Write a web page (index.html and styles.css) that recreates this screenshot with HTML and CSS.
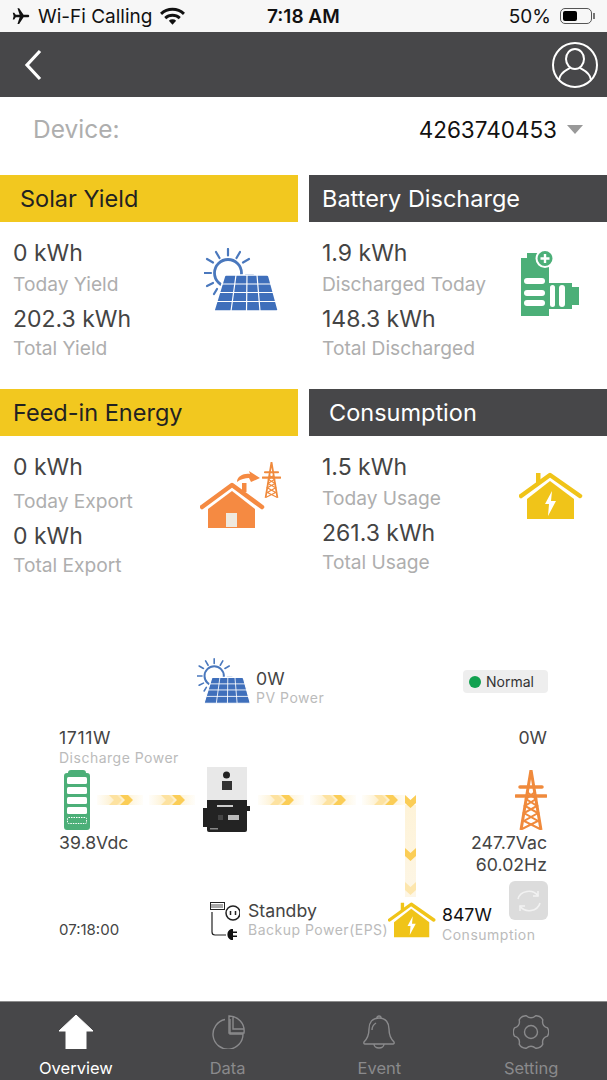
FILE: index.html
```html
<!DOCTYPE html>
<html lang="en">
<head>
    <meta charset="UTF-8">
    <meta name="viewport" content="width=device-width, initial-scale=1.0">
    <title>Overview</title>
    <link rel="stylesheet" href="styles.css">
</head>
<body>
    <svg class="defs" width="0" height="0">
        <defs>
            <linearGradient id="fadeBand" x1="0" x2="1" y1="0" y2="0">
                <stop offset="0" stop-color="#fdeec6" stop-opacity="0.1"/>
                <stop offset="0.45" stop-color="#fde8b4" stop-opacity="0.9"/>
                <stop offset="1" stop-color="#fdeec6" stop-opacity="0.1"/>
            </linearGradient>
            <linearGradient id="fadeDown" x1="0" x2="0" y1="0" y2="1">
                <stop offset="0" stop-color="#fef3d8"/>
                <stop offset="1" stop-color="#fdf6e6"/>
            </linearGradient>
            <symbol id="solar" viewBox="0 0 74 64">
                <g stroke="#4a78bd" stroke-width="2.2" fill="none" stroke-linecap="round">
                    <circle cx="24" cy="25" r="13.5" stroke-width="2.8"/>
                    <path d="M24 1v6.500M12 4l3.500 6M36 4l-3.500 6M3 11l6 3.500M45 11l-6 3.500M0 25h7M42 27h7M3 38l6-3M10 46l3-5"/>
                </g>
                <path d="M22 27h41q1.500 0 2 1.500l9 33q.3 1.500-1.500 1.500H11.500q-1.800 0-1.200-1.500l10-33q.4-1.500 1.700-1.500z" fill="#3f6fbb" stroke="#fff" stroke-width="1.600"/>
                <g stroke="#fff" stroke-width="1.200" fill="none">
                    <path d="M18 36h51M15.500 44.500h56M13 53.500h60.500"/>
                    <path d="M32 27l-5 36M43 27l-.5 36M53 27l3 36"/>
                </g>
            </symbol>
            <symbol id="battery-plus" viewBox="0 -4 58 68">
                <path d="M6 0h12v5h10v58H0V5h6z" fill="#4caf78"/>
                <path d="M28 30h23v26H28z" fill="#4caf78"/>
                <path d="M51 34h7v18h-7z" fill="#4caf78"/>
                <g fill="#fff">
                    <rect x="3" y="25" width="21" height="6" rx="3"/>
                    <rect x="3" y="37" width="21" height="6" rx="3"/>
                    <rect x="3" y="47" width="21" height="6" rx="3"/>
                    <rect x="29" y="32" width="5" height="22" rx="2.500"/>
                    <rect x="38" y="32" width="6" height="22" rx="3"/>
                </g>
                <circle cx="24" cy="5.500" r="8.500" fill="#4caf78" stroke="#fff" stroke-width="2"/>
                <path d="M24 1v9M19.500 5.500h9" stroke="#fff" stroke-width="2.400"/>
            </symbol>
            <symbol id="tower" viewBox="0 0 32 60">
                <g fill="none" stroke="#f08a3c">
                    <path d="M16 0L6 60M16 0l10 60" stroke-width="3"/>
                    <path d="M1 26h30M5 17h22" stroke-width="3.500" stroke-linecap="round"/>
                    <path d="M12 22l9 7-11 7 13 7-14 8 16 8M20 22l-9 7 11 7-13 7 14 8-16 8" stroke-width="2"/>
                </g>
            </symbol>
            <symbol id="feed-house" viewBox="0 0 82 70">
                <path d="M2 46L32 24l30 22" fill="none" stroke="#f58a42" stroke-width="4.500" stroke-linecap="round" stroke-linejoin="round"/>
                <path d="M42 22h4.500v9H42z" fill="#f58a42"/>
                <path d="M8 48L32 30l23 18v19H8z" fill="#f58a42"/>
                <path d="M26 52h11v14H26z" fill="#efe9df"/>
                <path d="M37 21c0-6 7-9 13-8l-1-3 11 7-9 4-2-4c-4 0-8 1-12 4z" fill="#f58a42"/>
                <use href="#tower" x="62" y="1" width="19" height="36"/>
            </symbol>
            <symbol id="yellow-house" viewBox="0 0 64 48">
                <path d="M2 24L31 3l30 21" fill="none" stroke="#f0c419" stroke-width="4.500" stroke-linecap="round" stroke-linejoin="round"/>
                <path d="M17 1h4.500v10H17z" fill="#f0c419"/>
                <path d="M8 27L31 9l24 18v20H8z" fill="#f0c419"/>
                <path d="M33 19l-7 13h4l-1 12 8-15h-5z" fill="#fff"/>
            </symbol>
            <symbol id="flow-h" viewBox="0 0 46 12">
                <rect x="0" y="1" width="46" height="10" fill="url(#fadeBand)"/>
                <path d="M12 1h8l5 5-5 5h-8l5-5z" fill="#fde2a0"/>
                <path d="M23 1h8l5 5-5 5h-8l5-5z" fill="#fbcd56"/>
            </symbol>
        </defs>
    </svg>

    <div class="statusbar">
        <div class="status-left">
            <svg class="plane" viewBox="0 0 24 24"><path d="M23 12c0-1-1-1.700-2-1.700h-5.600L9.500 1.500H7.300l2.900 8.800H5L3 7.500H1l1.200 4.500L1 16.500h2l2-2.800h5.200l-2.900 8.800h2.200l5.900-8.800H21c1 0 2-.7 2-1.700z" fill="#111"/></svg>
            <span>Wi-Fi Calling</span>
            <svg class="wifi" viewBox="0 0 24 18"><path d="M1 6.500a16 16 0 0 1 22 0M5 10.500a10.500 10.500 0 0 1 14 0" fill="none" stroke="#111" stroke-width="2.800"/><path d="M8.500 13a5 5 0 0 1 7 0L12 17z" fill="#111"/></svg>
        </div>
        <div class="status-time">7:18 AM</div>
        <div class="status-right">
            <span>50%</span>
            <div class="batt"><div class="batt-fill"></div></div>
            <div class="batt-tip"></div>
        </div>
    </div>

    <div class="header">
        <svg class="back" viewBox="0 0 18 32"><path d="M16 2L3 16l13 14" fill="none" stroke="#fff" stroke-width="3.200"/></svg>
        <svg class="avatar" viewBox="0 0 46 46" fill="none" stroke="#fff" stroke-width="2">
            <circle cx="23" cy="23" r="22"/>
            <ellipse cx="23" cy="17" rx="9" ry="10"/>
            <path d="M7 38c1-8 8-10 11-12M39 38c-1-8-8-10-11-12"/>
        </svg>
    </div>

    <div class="device-row">
        <span class="device-label">Device:</span>
        <span class="device-value">4263740453</span>
        <span class="caret"></span>
    </div>

    <div class="cards">
        <div class="card">
            <div class="card-title title-yellow title-solar">Solar Yield</div>
            <div class="card-body">
                <div class="card-info">
                    <div class="val">0 kWh</div>
                    <div class="lbl">Today Yield</div>
                    <div class="val">202.3 kWh</div>
                    <div class="lbl">Total Yield</div>
                </div>
                <svg class="ic ic-solar"><use href="#solar"/></svg>
            </div>
        </div>
        <div class="card">
            <div class="card-title title-dark">Battery Discharge</div>
            <div class="card-body">
                <div class="card-info">
                    <div class="val">1.9 kWh</div>
                    <div class="lbl">Discharged Today</div>
                    <div class="val">148.3 kWh</div>
                    <div class="lbl">Total Discharged</div>
                </div>
                <svg class="ic ic-batt"><use href="#battery-plus"/></svg>
            </div>
        </div>
        <div class="card">
            <div class="card-title title-yellow">Feed-in Energy</div>
            <div class="card-body loose">
                <div class="card-info">
                    <div class="val">0 kWh</div>
                    <div class="lbl">Today Export</div>
                    <div class="val">0 kWh</div>
                    <div class="lbl">Total Export</div>
                </div>
                <svg class="ic ic-feed"><use href="#feed-house"/></svg>
            </div>
        </div>
        <div class="card">
            <div class="card-title title-dark title-usage">Consumption</div>
            <div class="card-body">
                <div class="card-info">
                    <div class="val">1.5 kWh</div>
                    <div class="lbl">Today Usage</div>
                    <div class="val">261.3 kWh</div>
                    <div class="lbl">Total Usage</div>
                </div>
                <svg class="ic ic-home"><use href="#yellow-house"/></svg>
            </div>
        </div>
    </div>

    <div class="diagram">
        <svg class="flow" viewBox="0 0 607 350">
            <use href="#flow-h" x="97" y="144" width="46" height="12"/>
            <use href="#flow-h" x="149" y="144" width="46" height="12"/>
            <use href="#flow-h" x="258" y="144" width="46" height="12"/>
            <use href="#flow-h" x="310" y="144" width="46" height="12"/>
            <use href="#flow-h" x="362" y="144" width="46" height="12"/>
            <rect x="405" y="155" width="11" height="92" fill="url(#fadeDown)"/>
            <g fill="#fbcd56">
                <path d="M405 145l5.500 5 5.500-5v8l-5.500 5-5.500-5z"/>
                <path d="M405 198l5.500 5 5.500-5v8l-5.500 5-5.500-5z"/>
            </g>
            <path d="M405 232l5.500 5 5.500-5v8l-5.500 5-5.500-5z" fill="#fde6ad"/>
        </svg>

        <svg class="node pv-icon"><use href="#solar"/></svg>
        <div class="node t-val pv-val">0W</div>
        <div class="node t-sub pv-sub">PV Power</div>

        <div class="node pill"><span class="dot"></span>Normal</div>

        <div class="node t-val bat-val">1711W</div>
        <div class="node t-sub bat-sub">Discharge Power</div>
        <svg class="node bat-icon" viewBox="0 0 26 60">
            <path d="M7 0h12a3 3 0 0 1 3 3h1a3 3 0 0 1 3 3v51a3 3 0 0 1-3 3H3a3 3 0 0 1-3-3V6a3 3 0 0 1 3-3h1a3 3 0 0 1 3-3z" fill="#4caf78"/>
            <g fill="#fff">
                <rect x="3" y="7" width="20" height="7" rx="1.500"/>
                <rect x="3" y="17" width="20" height="7" rx="1.500"/>
                <rect x="3" y="27" width="20" height="7" rx="1.500"/>
                <rect x="3" y="37" width="20" height="7" rx="1.500"/>
            </g>
            <rect x="3.500" y="47.500" width="19" height="6" rx="1" fill="none" stroke="#fff" stroke-dasharray="1.500 1"/>
        </svg>
        <div class="node t-val bat-volt">39.8Vdc</div>

        <svg class="node inverter" viewBox="0 0 47 66">
            <rect x="4" y="0" width="40" height="33" fill="#e8e8e8"/>
            <circle cx="23.500" cy="8" r="3.500" fill="#222"/>
            <rect x="19" y="14" width="10" height="9" fill="#333"/>
            <rect x="0" y="41" width="4" height="19" fill="#222"/>
            <rect x="44" y="39" width="3" height="5" fill="#222"/>
            <path d="M4 33h40v30q0 2-2 2H6q-2 0-2-2z" fill="#232323"/>
            <rect x="14" y="38" width="16" height="2" fill="#ccc"/>
            <rect x="25" y="48" width="11" height="5" fill="#bbb"/>
            <rect x="15" y="48" width="5" height="5" fill="#444"/>
            <rect x="7" y="61" width="8" height="1.500" fill="#888"/>
        </svg>

        <div class="node t-val grid-val">0W</div>
        <svg class="node grid-icon"><use href="#tower"/></svg>
        <div class="node t-val grid-volt">247.7Vac</div>
        <div class="node t-val grid-hz">60.02Hz</div>
        <div class="node refresh">
            <svg viewBox="0 0 28 28" fill="none" stroke="#f2f2f2" stroke-width="1.600">
                <path d="M3 12a11 10 0 0 1 20-3M25 16a11 10 0 0 1-20 3"/>
                <path d="M23 4v5h-5M5 24v-5h5"/>
            </svg>
        </div>

        <svg class="node eps-icon" viewBox="0 0 30 38">
            <rect x="0.500" y="0.500" width="14" height="7" fill="#fff" stroke="#222"/>
            <path d="M2 2v4M4 2v4M6 2v4M8 2v4M10 2v4M12 2v4" stroke="#222" stroke-width="0.800"/>
            <circle cx="23" cy="11" r="7" fill="#fff" stroke="#222" stroke-width="1.500"/>
            <path d="M20.500 9v4M25.500 9v4" stroke="#222" stroke-width="1.500"/>
            <path d="M2 10v20q0 3 3 3h11" fill="none" stroke="#222" stroke-width="1.200"/>
            <path d="M21 27a6 6 0 0 0 0 11h2v-3h4v-1.500h-4v-2.500h4v-1.500h-4V27z" fill="#111"/>
        </svg>
        <div class="node t-val eps-val">Standby</div>
        <div class="node t-sub eps-sub">Backup Power(EPS)</div>
        <div class="node t-val clock">07:18:00</div>

        <svg class="node home-icon"><use href="#yellow-house"/></svg>
        <div class="node t-val home-val">847W</div>
        <div class="node t-sub home-sub">Consumption</div>
    </div>

    <div class="tabbar">
        <div class="tab active">
            <svg viewBox="0 0 36 34"><path d="M18 0l17 16H28v18H8V16H1z" fill="#fff" stroke="#fff" stroke-linejoin="round"/></svg>
            <span>Overview</span>
        </div>
        <div class="tab">
            <svg viewBox="0 0 34 34" fill="none" stroke="#8a8a8c" stroke-width="1.400"><path d="M14 4.500A15 15 0 1 0 32 19H19V4"/><path d="M18 1v17h15A15 15 0 0 0 18 1zM22 1.500V14h11"/></svg>
            <span>Data</span>
        </div>
        <div class="tab">
            <svg viewBox="0 0 34 34" fill="none" stroke="#8a8a8c" stroke-width="1.400"><path d="M17 3c-7 0-10 5-10 11 0 7-2 10-5 13-.5 1 0 2 1 2h28c1 0 1.500-1 1-2-3-3-5-6-5-13 0-6-3-11-10-11z"/><path d="M15 3a2 2 0 0 1 4 0M12 29a5 4 0 0 0 10 0M10 15c0-3 1-5 4-7"/></svg>
            <span>Event</span>
        </div>
        <div class="tab">
            <svg viewBox="0 0 36 34" fill="none" stroke="#8a8a8c" stroke-width="1.400"><path d="M34.500 12.900Q37 17 34.500 21.100Q28.400 23 29.800 29.200Q27.500 33.500 22.700 33.300Q18 29 13.300 33.300Q8.500 33.500 6.200 29.200Q7.600 23 1.500 21.100Q-1 17 1.500 12.900Q7.600 11 6.200 4.800Q8.500 .5 13.300 .7Q18 5 22.700 .7Q27.500 .5 29.800 4.800Q28.400 11 34.500 12.900z"/><circle cx="18" cy="17" r="6.500"/></svg>
            <span>Setting</span>
        </div>
    </div>
</body>
</html>
```

FILE: styles.css
```css
:root {
    --dark: #474749;
    --yellow: #f2c81f;
    --gray-text: #aeaeae;
    --value-text: #444;
    --ink: #222;
}
html, body {
    margin: 0;
    padding: 0;
    width: 607px;
    height: 1080px;
    overflow: hidden;
    font-family: Inter, "Liberation Sans", sans-serif;
    background: #fff;
    color: var(--ink);
}
body {
    display: flex;
    flex-direction: column;
}
.defs {
    position: absolute;
}

/* status bar */
.statusbar {
    height: 32px;
    background: #f7f7f7;
    display: flex;
    align-items: center;
    justify-content: space-between;
    padding: 0 12px;
    font-size: 19px;
    color: #111;
    box-sizing: border-box;
    position: relative;
}
.status-left {
    display: flex;
    align-items: center;
    gap: 8px;
}
.plane {
    width: 18px;
    height: 18px;
}
.wifi {
    width: 25px;
    height: 19px;
}
.status-time {
    font-weight: 600;
    position: absolute;
    left: 267px;
}
.status-right {
    display: flex;
    align-items: center;
}
.batt {
    width: 32px;
    height: 16px;
    border: 1px solid #555;
    border-radius: 5px;
    margin-left: 9px;
    padding: 2px;
    box-sizing: border-box;
}
.batt-fill {
    width: 14px;
    height: 100%;
    background: #000;
    border-radius: 2px;
}
.batt-tip {
    width: 2px;
    height: 6px;
    margin-left: 1px;
    background: #777;
}

/* header */
.header {
    height: 65px;
    background: var(--dark);
    display: flex;
    align-items: center;
    justify-content: space-between;
    padding: 0 9px 0 24px;
}
.back {
    width: 18px;
    height: 32px;
}
.avatar {
    width: 46px;
    height: 46px;
}

.device-row {
    height: 78px;
    display: flex;
    align-items: center;
    padding: 0 24px 14px 33px;
    box-sizing: border-box;
}
.device-label {
    font-size: 24.5px;
    color: var(--gray-text);
    flex: 1;
}
.device-value {
    font-size: 22.5px;
    color: #111;
}
.caret {
    margin-left: 10px;
    width: 0;
    height: 0;
    border-left: 8px solid transparent;
    border-right: 8px solid transparent;
    border-top: 9px solid #999;
}

/* cards */
.cards {
    display: grid;
    grid-template-columns: 298px 298px;
    column-gap: 11px;
    grid-auto-rows: 214px;
    margin-bottom: 47px;
}
.card-title {
    height: 47px;
    line-height: 47px;
    font-size: 23.5px;
    padding-left: 13px;
}
.title-yellow {
    background: var(--yellow);
    color: #222;
}
.title-dark {
    background: var(--dark);
    color: #fff;
}
.title-solar,
.title-usage {
    padding-left: 20px;
}
.card-body {
    display: flex;
    justify-content: space-between;
    padding-left: 13px;
}
.card-info {
    padding-top: 16px;
}
.val {
    font-size: 23px;
    line-height: 30px;
    color: var(--value-text);
}
.lbl {
    font-size: 19.2px;
    line-height: 28px;
    margin: 2px 0 6px;
    color: var(--gray-text);
}
.lbl:last-child {
    margin-top: 0;
}
.loose .lbl {
    margin: 5px 0 6px;
}
.loose .lbl:last-child {
    margin-top: 0;
}
.ic {
    display: block;
}
.ic-solar {
    width: 74px;
    height: 64px;
    margin: 26px 20px 0 0;
}
.ic-batt {
    width: 58px;
    height: 68px;
    margin: 27px 28px 0 0;
}
.ic-feed {
    width: 82px;
    height: 70px;
    margin: 25px 16px 0 0;
}
.ic-home {
    width: 64px;
    height: 48px;
    margin: 36px 24px 0 0;
}

/* energy flow diagram, nodes placed on a free canvas */
.diagram {
    position: relative;
    flex: 1;
}
.flow {
    position: absolute;
    left: 0;
    top: 0;
    width: 607px;
    height: 350px;
}
.node {
    position: absolute;
    white-space: nowrap;
}
.t-val {
    font-size: 17.7px;
    line-height: 22px;
    color: var(--value-text);
}
.t-sub {
    font-size: 14px;
    line-height: 20px;
    letter-spacing: 0.5px;
    color: #bbb;
}
.pv-icon { left: 197px; top: 6px; width: 53px; height: 50px; }
.pv-val { left: 256px; top: 18px; }
.pv-sub { left: 256px; top: 38px; }
.pill {
    left: 463px;
    top: 20px;
    width: 85px;
    height: 23px;
    background: #eee;
    border-radius: 4px;
    display: flex;
    align-items: center;
    font-size: 14px;
    color: #333;
}
.dot {
    width: 12px;
    height: 12px;
    margin: 0 5px 0 6px;
    background: #12a150;
    border-radius: 50%;
}
.bat-val { left: 59px; top: 77px; letter-spacing: 0.6px; }
.bat-sub { left: 59px; top: 98px; }
.bat-icon { left: 64px; top: 120px; width: 26px; height: 60px; }
.bat-volt { left: 59px; top: 182px; }
.inverter { left: 203px; top: 117px; width: 47px; height: 66px; }
.grid-val { right: 60px; top: 77px; }
.grid-icon { left: 515px; top: 120px; width: 32px; height: 60px; }
.grid-volt { right: 60px; top: 182px; }
.grid-hz { right: 60px; top: 204px; }
.refresh {
    left: 509px;
    top: 231px;
    width: 39px;
    height: 39px;
    background: #dcdcdc;
    border-radius: 6px;
    display: flex;
    align-items: center;
    justify-content: center;
}
.refresh svg {
    width: 28px;
    height: 28px;
}
.eps-icon { left: 210px; top: 252px; width: 30px; height: 38px; }
.eps-val { left: 248px; top: 250px; }
.eps-sub { left: 248px; top: 270px; }
.clock { left: 59px; top: 269px; font-size: 15px; }
.home-icon { left: 388px; top: 250px; width: 48px; height: 40px; }
.home-val { left: 442px; top: 254px; color: #111; }
.home-sub { left: 442px; top: 275px; }

/* tab bar */
.tabbar {
    height: 79px;
    background: var(--dark);
    border-top: 1px solid #8d8d8d;
    box-sizing: border-box;
    display: grid;
    grid-template-columns: repeat(4, 1fr);
}
.tab {
    display: flex;
    flex-direction: column;
    align-items: center;
    padding-top: 13px;
    font-size: 16.5px;
    color: #8a8a8c;
}
.tab svg {
    width: 36px;
    height: 34px;
}
.tab span {
    margin-top: 9px;
}
.tab.active {
    color: #fff;
}
```
